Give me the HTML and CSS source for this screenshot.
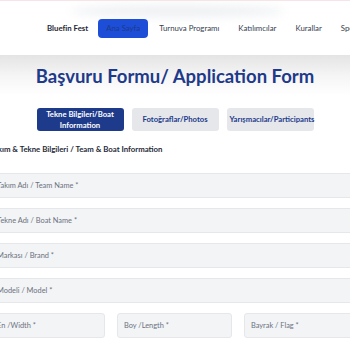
FILE: index.html
```html
<!DOCTYPE html>
<html lang="tr">
<head>
    <meta charset="UTF-8">
    <title>Bluefin Fest - Başvuru Formu</title>
    <link rel="stylesheet" href="styles.css">
</head>
<body>
<header class="topbar">
    <div class="topbar-glow"></div>
    <nav class="nav">
        <span class="brand">Bluefin Fest</span>
        <a class="nav-link active" href="#">Ana Sayfa</a>
        <a class="nav-link" href="#">Turnuva Programı</a>
        <a class="nav-link" href="#">Katılımcılar</a>
        <a class="nav-link" href="#">Kurallar</a>
        <a class="nav-link" href="#">Sponsorlar</a>
    </nav>
</header>

<main class="page">
    <h1 class="title">Başvuru Formu/ Application Form</h1>

    <div class="tabs">
        <button class="tab active">Tekne Bilgileri/Boat Information</button>
        <button class="tab">Fotoğraflar/Photos</button>
        <button class="tab">Yarışmacılar/Participants</button>
    </div>

    <form class="form">
        <h3 class="section-title">Takım &amp; Tekne Bilgileri / Team &amp; Boat Information</h3>
        <input type="text" name="team_name" placeholder="Takım Adı / Team Name *">
        <input type="text" name="boat_name" placeholder="Tekne Adı / Boat Name *">
        <input type="text" name="brand" placeholder="Markası / Brand *">
        <input type="text" name="model" placeholder="Modeli / Model *">
        <div class="row">
            <input type="text" name="width" placeholder="En /Width *">
            <input type="text" name="length" placeholder="Boy /Length *">
            <input type="text" name="flag" placeholder="Bayrak / Flag *">
        </div>
    </form>
</main>
</body>
</html>
```

FILE: styles.css
```css
body {
    margin: 0;
    font-family: 'Lato', 'Open Sans', sans-serif;
    background: #ffffff;
    overflow: hidden;
    border-top: 1px solid #f6e4e6;
}

.topbar {
    position: relative;
    height: 54px;
    background: #ffffff;
}

.topbar-glow {
    position: absolute;
    top: 4px;
    left: 70px;
    width: 215px;
    height: 12px;
    border-radius: 50%;
    background: #eef0f3;
    filter: blur(5px);
}

.nav {
    position: relative;
    display: flex;
    align-items: center;
    gap: 2px;
    height: 54px;
    padding-left: 47px;
    white-space: nowrap;
    font-size: 7.8px;
}

.brand {
    font-weight: 700;
    color: #1f2937;
    margin-right: 8px;
}

.nav-link {
    color: #374151;
    text-decoration: none;
    padding: 0 8px;
    line-height: 19px;
    border-radius: 4px;
}

.nav-link + .nav-link {
    margin-left: 1px;
}

.nav-link.active {
    background: #1d4ed8;
    color: #1e3a8a;
}

.page {
    background: linear-gradient(180deg, #e4e4e5 0px, #f6f6f6 22px, #ffffff 40px);
    padding-top: 7px;
}

.title {
    margin: 0;
    text-align: center;
    font-size: 18.5px;
    line-height: 28px;
    font-weight: 700;
    color: #1e3a8a;
}

.tabs {
    display: flex;
    justify-content: center;
    gap: 8px;
    margin-top: 18px;
}

.tab {
    width: 87px;
    height: 23px;
    padding: 0 3px;
    border: none;
    border-radius: 3px;
    background: #e5e7eb;
    color: #1e3a8a;
    font-family: inherit;
    font-size: 7.7px;
    font-weight: 700;
    line-height: 11px;
}

.tab.active {
    background: #1e3a8a;
    color: #ffffff;
}

.form {
    width: 369px;
    margin-left: -10px;
    box-sizing: border-box;
}

.section-title {
    margin: 12px 0 0;
    line-height: 12px;
    font-size: 7.8px;
    font-weight: 700;
    color: #1f2937;
}

input {
    display: block;
    box-sizing: border-box;
    width: 100%;
    height: 25px;
    margin-top: 10px;
    padding: 0 6px;
    font-family: inherit;
    font-size: 7.4px;
    background: #f3f4f6;
    border: 1px solid #e5e7eb;
    border-radius: 3px;
}

.section-title + input {
    margin-top: 18px;
}

input::placeholder {
    color: #6b7280;
}

.row {
    display: flex;
    gap: 12px;
    margin-top: 10px;
}

.row input {
    flex: 1;
    min-width: 0;
    margin-top: 0;
}
```
